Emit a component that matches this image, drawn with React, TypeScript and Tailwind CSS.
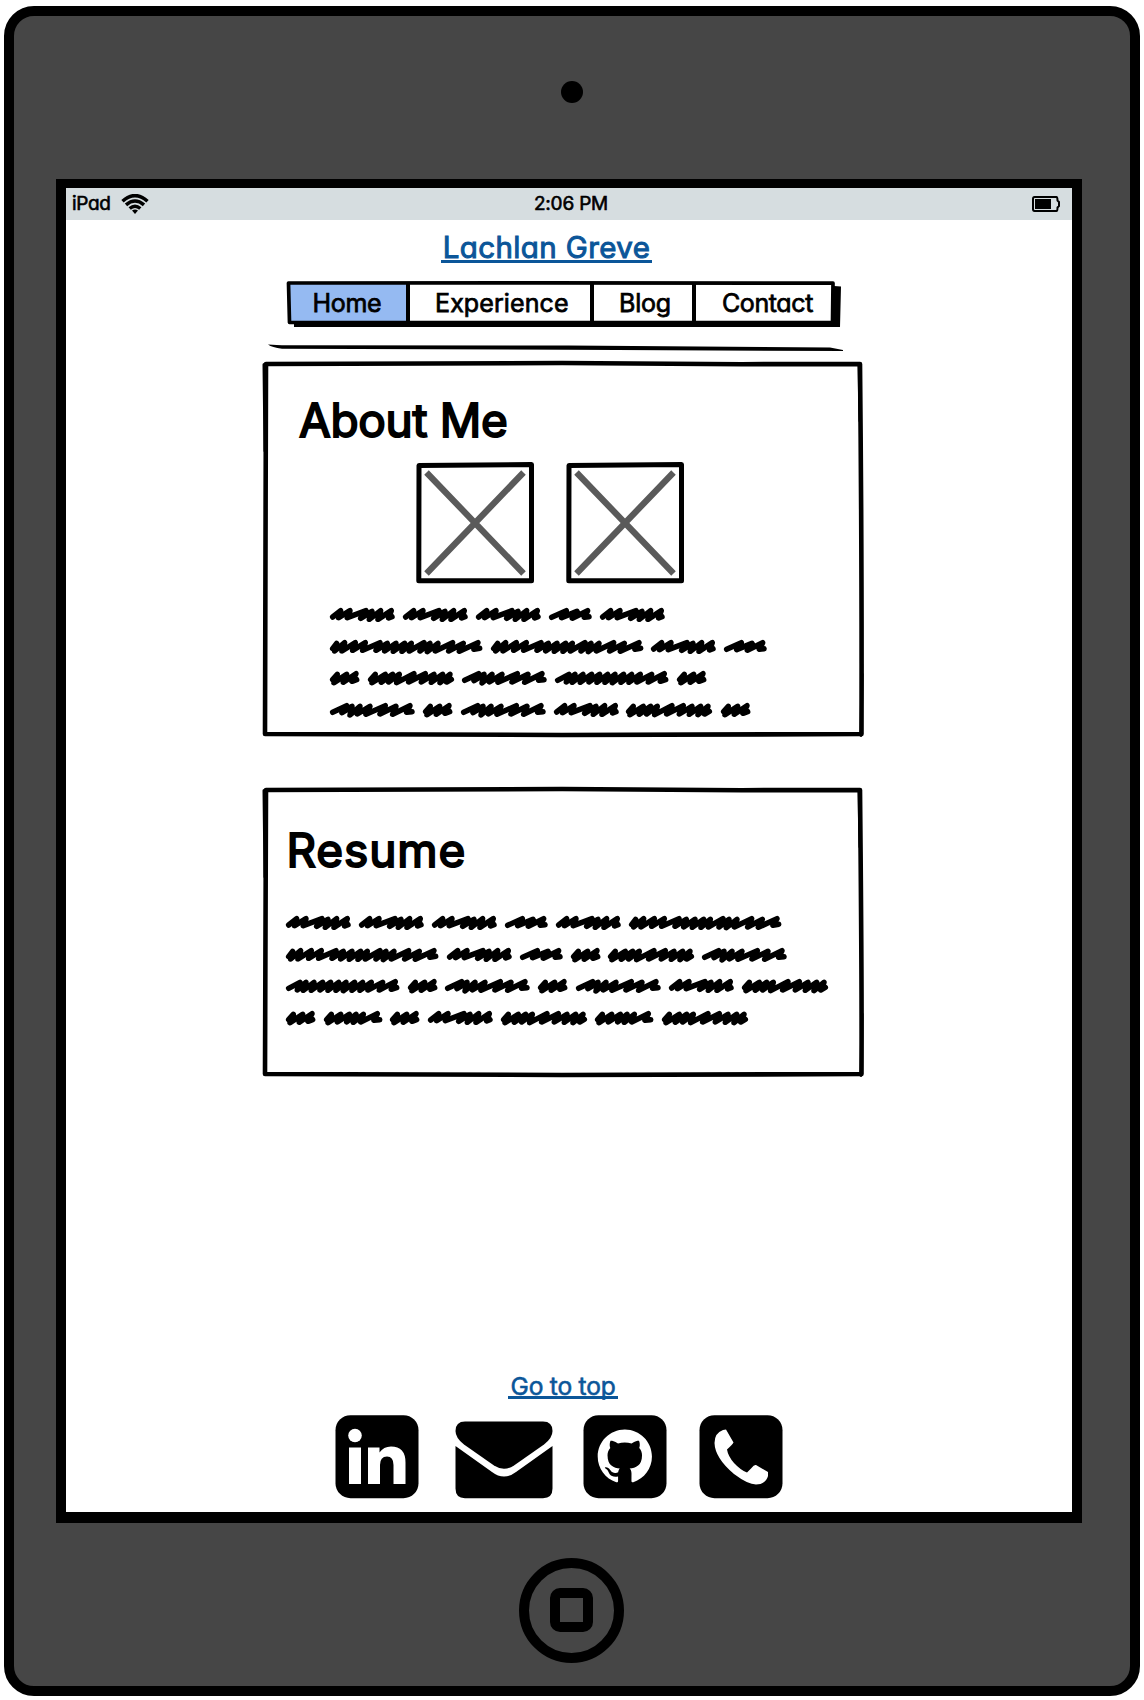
import React from "react";

// Pen strokes of each scribbled word: [width, points], three units per pixel.
const WORDS: Record<string, [number, string]> = {
  A: [194, "8,27 32,8 26,29 60,8 52,29 108,8 92,31 126,10 118,34 152,8 144,34 184,8 176,30 186,26"],
  B: [457, "8,26 20,10 14,33 44,8 36,33 76,8 68,31 106,8 98,31 150,8 138,31 172,10 164,33 198,10 190,34 224,10 216,34 244,10 238,33 282,8 270,33 300,10 292,35 324,10 316,33 368,8 356,33 400,10 388,34 444,8 432,28 449,25"],
  C: [88, "8,26 22,10 12,35 50,10 40,34 78,8 66,31 80,26"],
  D: [258, "8,26 22,10 12,35 52,10 40,34 74,10 62,33 94,10 86,35 138,8 122,33 172,8 160,33 198,10 190,34 224,10 216,35 246,10 236,33 250,25"],
  E: [254, "8,28 50,8 36,29 66,10 60,36 90,10 82,33 120,10 108,34 166,8 150,33 198,10 188,34 240,8 230,28 246,26"],
  F: [128, "8,28 52,8 38,29 84,10 70,31 116,8 106,28 120,26"],
  G: [340, "8,28 42,10 34,33 60,10 52,34 84,10 76,34 110,10 102,33 134,10 126,34 158,10 150,34 180,10 172,35 206,10 198,34 230,10 222,34 256,10 246,33 290,10 280,33 328,8 316,31 332,26"],
  H: [175, "8,26 22,10 12,35 50,10 40,33 76,10 68,33 96,10 88,34 118,10 110,33 160,8 150,28 167,26"],
};

function Scribble({ lines }: { lines: string[] }) {
  return (
    <div className="flex flex-col gap-[17.5px]">
      {lines.map((line, i) => (
        <div key={i} className="flex h-[14px] gap-[8.3px]">
          {line.split("").map((k, j) => (
            <svg key={j} width={WORDS[k][0] / 3} height={14} viewBox={`0 0 ${WORDS[k][0]} 42`} className="shrink-0 overflow-visible">
              <polyline points={WORDS[k][1]} fill="none" stroke="#000" strokeWidth={16.5} strokeLinecap="round" strokeLinejoin="round" />
            </svg>
          ))}
        </div>
      ))}
    </div>
  );
}

function Card({ height, className, children }: { height: number; className: string; children: React.ReactNode }) {
  const b = height - 3;
  return (
    <section className={`relative ml-[196px] w-[602px] ${className}`}>
      <svg className="absolute inset-0 overflow-visible" width={602} height={height} fill="none" stroke="#000" strokeLinejoin="round">
        <path d={`M4 3 L300 2 L480 3.2 L598 3 Q600 200 599.500 ${b} L300 ${b + 1} L3 ${b} Q3 180 4 3Z`} strokeWidth={4.6} />
        <path d={`M2 3.500 L3 90 M597 3 L598 60 M600 ${b - 60} L599 ${b + 1.500}`} strokeWidth={3} strokeLinecap="round" />
      </svg>
      {children}
    </section>
  );
}

function Placeholder() {
  return (
    <svg width={118} height={122} viewBox="0 0 118 122" fill="none">
      <path d="M3 3.4L115.500 2.500V118.800H2.800Z" stroke="#000" strokeWidth={5} />
      <path d="M10.500 10.500L107.500 111.500M107.500 10.500L10.500 111.500" stroke="#5a5a5a" strokeWidth={6.300} />
    </svg>
  );
}

function Tile({ children }: { children: React.ReactNode }) {
  return (
    <svg width={84} height={84} viewBox="0 0 84 84">
      <rect x={0.5} y={0.2} width={83} height={83} rx={15} />
      <g fill="#fff">{children}</g>
    </svg>
  );
}

export default function App() {
  return (
    <div className="h-[1700px] w-[1144px] overflow-hidden bg-white pl-1 pt-1.5 font-['Inter',sans-serif] text-black [font-feature-settings:'cv11'] [stroke-linejoin:round]">
      <div className="flex h-[1690px] w-[1136px] flex-col items-center rounded-[30px] border-[10px] border-black bg-[#464646]">
        <div className="mt-[65px] size-[22px] rounded-full bg-black" />
        <main className="mr-[6px] mt-[76px] flex h-[1344px] w-[1026px] shrink-0 flex-col border-x-[10px] border-b-[11px] border-t-[9px] border-black bg-white">
          <div className="grid h-8 shrink-0 grid-cols-3 items-center bg-[#d6dde0] text-[19px] leading-none [-webkit-text-stroke:0.6px_#000]">
            <div className="flex items-center gap-2.5 pl-1.5">
              <span className="relative -top-px tracking-[-0.3px]">iPad</span>
              <svg width={28} height={20} viewBox="0 0 28 20" fill="none" stroke="#000" strokeWidth={3.500}>
                <path d="M1.500 7.200Q14-4 26.500 7.200M5 10.900Q14 3 23 10.900M8.700 14.500Q14 10 19.300 14.500" />
                <path d="M11 16.500Q14 14.500 17 16.500L14 20Z" fill="#000" stroke="none" />
              </svg>
            </div>
            <span className="relative -top-px left-[2px] text-center tracking-[-0.2px]">2:06 PM</span>
            <svg className="mr-3 justify-self-end" width={28} height={16} viewBox="0 0 28 16">
              <path d="M2.500 1H24.500Q25.500 1 25.500 4.500L27 6V10L25.500 11.500Q25.500 15 24.500 15H2.500Q1 15 1 13V3Q1 1 2.500 1Z" fill="none" stroke="#000" strokeWidth={2} />
              <rect x={3} y={3} width={16} height={10} />
            </svg>
          </div>

          <a className="ml-[375px] mt-[10px] flex h-[33px] w-[211px] justify-center border-b-[3.500px] border-[#0b5699] text-[29.500px] leading-[34px] tracking-[0.4px] text-[#0b5699] [-webkit-text-stroke:1px_#0b5699]">
            <span className="whitespace-nowrap">Lachlan Greve</span>
          </a>

          <nav className="relative ml-[221px] mt-[18px] flex h-[46px] w-[554px] shrink-0 text-[25px] leading-[45px] [-webkit-text-stroke:0.75px_#000]">
            <svg className="absolute inset-0 overflow-visible" width={554} height={46}>
              <path d="M547 5L554 5.500L553 46H7V40H547Z" />
              <path d="M1.800 2L250 1.800L545.500 2.200V41.200H1.800Z" fill="#fff" />
              <path d="M2 3H119V41H2Z" fill="#95baf2" />
              <path d="M1.500 2L250 1.800L546 2.200L545.500 41.700L2.500 41.500Z" fill="none" stroke="#000" strokeWidth={3.700} />
              <path d="M121 2V42M305 2V42M407 2V42" stroke="#000" strokeWidth={4} />
            </svg>
            <span className="relative w-[121px] pl-[25.500px] tracking-[-0.3px]">Home</span>
            <span className="relative w-[184px] pl-[27px] tracking-[0.1px]">Experience</span>
            <span className="relative w-[102px] pl-[27px] tracking-[-0.2px]">Blog</span>
            <span className="relative pl-[28px] tracking-[-0.4px]">Contact</span>
          </nav>

          <svg className="ml-[202px] mt-[17px] shrink-0" width={576} height={8}>
            <path d="M0 .5Q10 1 14 1.200L300 1.500L562 3.500L575 6V7L300 5.800L14 4.800Q4 3.500 0 .5Z" />
          </svg>

          <Card height={376} className="mt-[9px] h-[376px] shrink-0">
            <h1 className="ml-[37px] pt-[31px] text-[46px] leading-[56px] tracking-[-0.3px] [-webkit-text-stroke:1.900px_#000]">About Me</h1>
            <div className="ml-[154px] mt-[14px] flex gap-8"><Placeholder /><Placeholder /></div>
            <div className="ml-[68px] mt-[24px]"><Scribble lines={["AAAFA", "BBAF", "CDEGC", "ECEADC"]} /></div>
          </Card>

          <Card height={290} className="mt-[50px] h-[290px] shrink-0">
            <h1 className="ml-[24.500px] pt-[35px] text-[46px] leading-[56px] tracking-[0.9px] [-webkit-text-stroke:1.900px_#000]">Resume</h1>
            <div className="ml-[24px] mt-[38px]"><Scribble lines={["AAAFAB", "BAFCDE", "GCECEAD", "CHCADHD"]} /></div>
          </Card>

          <a className="ml-[442px] mt-auto flex h-[28px] w-[110px] shrink-0 justify-center border-b-[3px] border-[#0b5699] text-[24.500px] leading-[30px] tracking-[-0.2px] text-[#0b5699] [-webkit-text-stroke:0.6px_#0b5699]">
            <span className="whitespace-nowrap">Go to top</span>
          </a>
          <div className="mb-[13px] ml-[269px] mt-[16px] flex shrink-0 items-start">
            <Tile>
              <circle cx={20} cy={20.500} r={6.800} />
              <path d="M14 32.500H26V69H14ZM33 32.500H44.500V37.500Q48.500 31.500 56 31.500Q70.500 31.500 70.500 47.500V69H58.500V50Q58.500 41.500 52 41.500Q45 41.500 45 50V69H33Z" />
            </Tile>
            <svg className="ml-[36px] mt-[6px]" width={98} height={78} viewBox="0 0 98 78">
              <path d="M10 .4H88Q97.500 .4 97.500 10Q97.500 17 89 23.500L59 44.500Q49 51 39 44.500L9 23.500Q.5 17 .5 10Q.5 .4 10 .4Z" />
              <path d="M.5 25L37 51Q49 60 61 51L97.500 25V67.500Q97.500 77.200 88 77.200H10Q.5 77.200 .5 67.500Z" />
            </svg>
            <div className="ml-[30px]">
              <Tile>
                <path transform="translate(14.700 13.800) scale(2.260)" d="M12 .297c-6.630 0-12 5.373-12 12 0 5.303 3.438 9.800 8.205 11.385.6.113.82-.258.82-.577 0-.285-.010-1.040-.015-2.040-3.338.724-4.042-1.610-4.042-1.610C4.422 18.070 3.633 17.700 3.633 17.700c-1.087-.744.084-.729.084-.729 1.205.084 1.838 1.236 1.838 1.236 1.070 1.835 2.809 1.305 3.495.998.108-.776.417-1.305.760-1.605-2.665-.3-5.466-1.332-5.466-5.930 0-1.310.465-2.380 1.235-3.220-.135-.303-.540-1.523.105-3.176 0 0 1.005-.322 3.300 1.230.960-.267 1.980-.399 3-.405 1.020.006 2.040.138 3 .405 2.280-1.552 3.285-1.230 3.285-1.230.645 1.653.240 2.873.120 3.176.765.840 1.230 1.910 1.230 3.220 0 4.610-2.805 5.625-5.475 5.920.420.360.810 1.096.810 2.220 0 1.606-.015 2.896-.015 3.286 0 .315.210.690.825.570C20.565 22.092 24 17.592 24 12.297c0-6.627-5.373-12-12-12" />
              </Tile>
            </div>
            <div className="ml-[32px]">
              <Tile>
                <path d="M24 15L27 14.500L34.500 27.500Q34 29 28 34.500Q29 41 35 48Q42 55.500 48 57.500L52.500 53Q55 49.500 57 50L69 57V61Q67 69 57 69.500Q49 69.500 35 59Q16 43 15.500 28Q15.500 18 24 15Z" />
              </Tile>
            </div>
          </div>
        </main>
        <div className="mr-px mt-[34.500px] flex size-[105px] shrink-0 items-center justify-center rounded-full border-[10px] border-black">
          <div className="h-[44px] w-[43px] rounded-[10px] border-[10px] border-black" />
        </div>
      </div>
    </div>
  );
}
